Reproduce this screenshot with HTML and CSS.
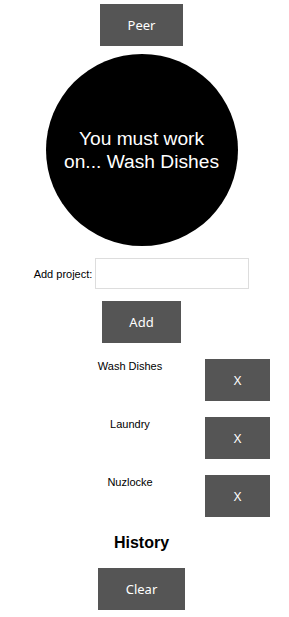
FILE: index.html
```html
<!DOCTYPE html>
<html lang="en">
<head>
    <meta charset="UTF-8">
    <meta name="viewport" content="width=device-width, initial-scale=1.0">
    <title>Project Picker</title>
    <link rel="stylesheet" href="styles.css">
</head>
<body>
    <div class="app">
        <button class="button peer">Peer</button>

        <div class="circle">
            <p>You must work on... Wash Dishes</p>
        </div>

        <div class="add-row">
            <label for="project">Add project:</label>
            <input type="text" id="project">
        </div>
        <button class="button add">Add</button>

        <div class="tasks">
            <div class="task">
                <span class="task-name">Wash Dishes</span>
                <button class="button remove">X</button>
            </div>
            <div class="task">
                <span class="task-name">Laundry</span>
                <button class="button remove">X</button>
            </div>
            <div class="task">
                <span class="task-name">Nuzlocke</span>
                <button class="button remove">X</button>
            </div>
        </div>

        <h3 class="history">History</h3>
        <button class="button clear">Clear</button>
    </div>
</body>
</html>
```

FILE: styles.css
```css
body {
    margin: 0;
    background: #fff;
    color: #000;
    font-family: "Liberation Sans", Arial, sans-serif;
}
.app {
    width: 283px;
    padding-top: 4px;
    display: flex;
    flex-direction: column;
    align-items: center;
}
.button {
    background-color: #555;
    color: #fff;
    border: none;
    height: 42px;
    padding: 0;
    font-family: "Noto Sans", "Open Sans", sans-serif;
    font-size: 13px;
    cursor: pointer;
}
.peer { width: 83px; }
.add { width: 79px; margin-top: 12px; }
.clear { width: 87px; }
.remove { width: 65px; }

.circle {
    width: 192px;
    height: 192px;
    margin-top: 8px;
    border-radius: 50%;
    background: #000;
    color: #fff;
    display: flex;
    align-items: center;
    justify-content: center;
    text-align: center;
}
.circle p {
    width: 160px;
    margin: 0;
    font-size: 19.2px;
    line-height: 23px;
}

.add-row {
    margin-top: 12px;
    display: flex;
    align-items: center;
    gap: 3px;
    font-size: 11px;
}
.add-row input {
    width: 154px;
    height: 31px;
    box-sizing: border-box;
    border: 1px solid #ddd;
    margin: 0;
}

.tasks {
    margin-top: 16px;
    align-self: flex-start;
    margin-left: 60px;
    display: flex;
    flex-direction: column;
    gap: 16px;
}
.task {
    display: flex;
    align-items: flex-start;
    gap: 5px;
}
.task-name {
    width: 140px;
    text-align: center;
    font-size: 11px;
    padding-top: 1px;
}

.history {
    margin: 17px 0 16px;
    font-size: 16px;
    line-height: 18px;
}
```
